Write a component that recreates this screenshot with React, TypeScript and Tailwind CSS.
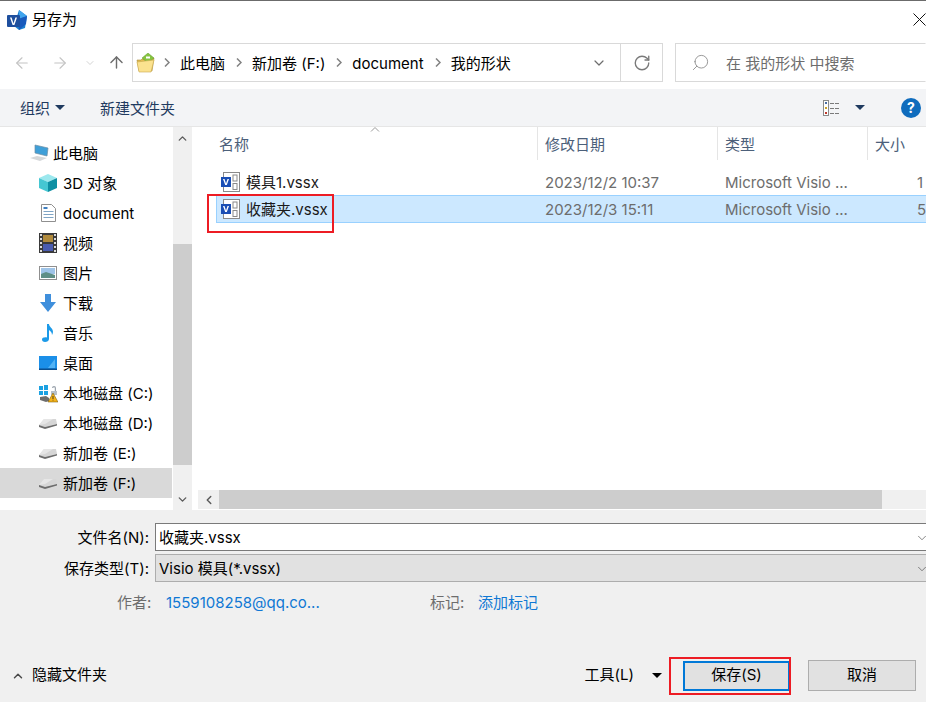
import React from "react";
import { ArrowLeft, ArrowRight, ArrowUp, ChevronDown, ChevronLeft, ChevronUp, RotateCw, Search } from "lucide-react";

const FONT = "font-['Inter','Noto_Sans_CJK_SC',sans-serif]";

function VisioLogo() {
  return (
    <svg width="20" height="20" viewBox="0 0 20 20" className="shrink-0">
      <path d="M12 0l8 6-2 12-6 2-5-4z" fill="#1a7fd0" />
      <path d="M12 0l8 6-8 3z" fill="#41a5ee" />
      <path d="M11 9l9-3-1 8-7 6z" fill="#185abd" />
      <rect x="0" y="5" width="13" height="12" rx="1" fill="#1e4f9e" />
      <path d="M3 7.5h1.6l1.9 6 1.9-6H10l-2.6 7.5H5.6z" fill="#fff" />
    </svg>
  );
}

function FileIcon() {
  return (
    <svg width="19" height="20" viewBox="0 0 19 20" className="shrink-0">
      <rect x="2.5" y="0.5" width="16" height="19" fill="#fff" stroke="#8a8a8a" />
      <rect x="12" y="3" width="4" height="6" fill="#fff" stroke="#8a8a8a" />
      <rect x="12" y="11.5" width="4" height="6" fill="#fff" stroke="#8a8a8a" />
      <rect x="0" y="5" width="10" height="10" fill="#1b4fb5" />
      <path d="M2 7h1.5l1.500 4.500L6.500 7H8l-2.200 6H4.200z" fill="#fff" />
    </svg>
  );
}

function AddressFolder() {
  return (
    <svg width="19" height="20" viewBox="0 0 19 20">
      <path d="M1 7h4l1-1h4l8-1-2 13H3z" fill="#e3bd4f" stroke="#a88c3c" strokeWidth="0.6" />
      <path d="M6 5l6-5 6 5-6 5z" fill="#86c440" stroke="#5f9a2a" strokeWidth="0.5" />
      <path d="M10 3.500h4v2h-4z" fill="#fff" />
      <path d="M1 9l17-2-3 12H3z" fill="#fbe28f" stroke="#c9a94f" strokeWidth="0.6" />
    </svg>
  );
}

function DriveIcon() {
  return (
    <svg width="18" height="11" viewBox="0 0 18 11">
      <path d="M5 1h12l1 5-12 3-6-2z" fill="#d6d6d6" />
      <path d="M0 7l6 2 12-3v1.500L6 11 0 9z" fill="#6d6d6d" />
      <path d="M5 1h9L6 6 0 7z" fill="#e6e6e6" />
    </svg>
  );
}

function NavIcon({ name }: { name: string }) {
  switch (name) {
    case "pc":
      return (
        <svg width="20" height="18" viewBox="0 0 20 18">
          <path d="M6 1l13 3-1 8-12-3z" fill="#3f9fd8" stroke="#6f8ea3" strokeWidth="0.7" />
          <path d="M1 14l7-2 10 2-7 3z" fill="#d5d8da" />
        </svg>
      );
    case "cube":
      return (
        <svg width="18" height="18" viewBox="0 0 18 18">
          <path d="M9 0l9 4-9 4-9-4z" fill="#9ce8ee" />
          <path d="M0 4l9 4v10l-9-4z" fill="#45c7d2" />
          <path d="M18 4L9 8v10l9-4z" fill="#0d8fa3" />
        </svg>
      );
    case "doc":
      return (
        <svg width="15" height="18" viewBox="0 0 15 18">
          <path d="M.5.500h10l4 4v13H.500z" fill="#fff" stroke="#8f8f8f" />
          <path d="M2.500 3h4v2h-4z" fill="#3f7fc0" />
          <path d="M2.500 7h10v1h-10zM2.500 10h10v1h-10zM2.500 13h10v1h-10z" fill="#7fa4c4" />
        </svg>
      );
    case "film":
      return (
        <svg width="18" height="20" viewBox="0 0 18 20">
          <rect width="18" height="20" fill="#3a3a3a" />
          <path d="M1 1h2v2H1zM1 5h2v2H1zM1 9h2v2H1zM1 13h2v2H1zM1 17h2v2H1zM15 1h2v2h-2zM15 5h2v2h-2zM15 9h2v2h-2zM15 13h2v2h-2zM15 17h2v2h-2z" fill="#ddd" />
          <rect x="4" y="2" width="10" height="7" fill="#b08a3c" />
          <rect x="4" y="11" width="10" height="7" fill="#4a5cb0" />
        </svg>
      );
    case "pic":
      return (
        <svg width="18" height="14" viewBox="0 0 18 14">
          <rect x=".5" y=".5" width="17" height="13" fill="#fff" stroke="#8f8f8f" />
          <rect x="2" y="2" width="14" height="6" fill="#9fc4e8" />
          <path d="M2 8l5-2 9 3v3H2z" fill="#5f8f86" />
        </svg>
      );
    case "down":
      return (
        <svg width="16" height="18" viewBox="0 0 16 18">
          <path d="M5 0h6v8h5l-8 10L0 8h5z" fill="#3f8fdc" />
        </svg>
      );
    case "music":
      return (
        <svg width="12" height="18" viewBox="0 0 12 18">
          <path d="M5 0h2c0 3 4 4 4 8 0 1-.5 2-1 3 0-3-2-4-3-5v9c0 2-2 3-4 3s-3-1-3-2.500S2 13 5 13.500z" fill="#1c9ae8" />
        </svg>
      );
    case "desk":
      return (
        <svg width="18" height="14" viewBox="0 0 18 14">
          <rect width="18" height="14" fill="#1b8fe8" />
          <path d="M9 12l7-9v9z" fill="#52b3f5" />
          <rect y="12.500" width="18" height="1.500" fill="#0b4f8f" />
        </svg>
      );
    case "win":
      return (
        <svg width="20" height="20" viewBox="0 0 20 20" className="shrink-0">
          <path d="M1 3h4v4H1zM6 2h4v5H6zM1 8h4v4H1zM6 8h4v4H6z" fill="#1ba1e2" />
          <path d="M2 14l6-1 3 2v3l-3 1-6-2z" fill="#6d6d6d" />
          <path d="M14 5a2 2 0 014 0v4h-1.200V5a.8.8 0 00-1.600 0z" fill="#9aa3ad" />
          <rect x="13" y="8" width="6" height="4" fill="#b7c0c9" />
          <path d="M15 10l5 9H10z" fill="#f5b31a" stroke="#6b4f00" strokeWidth="0.5" />
          <path d="M14.600 13h.8v3h-.8zM14.600 16.800h.8v.8h-.8z" fill="#222" />
        </svg>
      );
    default:
      return <DriveIcon />;
  }
}

const TREE = [
  { label: "3D 对象", icon: "cube" },
  { label: "document", icon: "doc" },
  { label: "视频", icon: "film" },
  { label: "图片", icon: "pic" },
  { label: "下载", icon: "down" },
  { label: "音乐", icon: "music" },
  { label: "桌面", icon: "desk" },
  { label: "本地磁盘 (C:)", icon: "win" },
  { label: "本地磁盘 (D:)", icon: "drive" },
  { label: "新加卷 (E:)", icon: "drive" },
  { label: "新加卷 (F:)", icon: "drive", active: true },
];

const CRUMBS = ["此电脑", "新加卷 (F:)", "document", "我的形状"];

const Caret = () => (
  <span className="inline-block h-0 w-0 border-x-[5px] border-t-[5px] border-x-transparent border-t-[#1f3a5f]" />
);

function Crumb({ label }: { label: string }) {
  return (
    <div className="flex items-center">
      <svg width="6" height="9" viewBox="0 0 6 9" className="mr-[10px]">
        <path d="M1 .5l4 4-4 4" fill="none" stroke="#808080" strokeWidth="1.5" />
      </svg>
      <span className="mr-[11px] whitespace-nowrap pt-[3px] text-[15px] text-black">{label}</span>
    </div>
  );
}

function FileRow({ name, date, size, selected }: { name: string; date: string; size: string; selected?: boolean }) {
  return (
    <div
      className={
        selected
          ? "ml-[21px] flex h-[28px] items-center border-y border-l border-[#99d1ff] bg-[#cce8ff]"
          : "ml-[21px] flex h-[27px] items-center border-y border-l border-transparent"
      }
    >
      <div className="flex w-[328px] shrink-0 items-center pl-[4px]">
        <FileIcon />
        <span className={`ml-[6px] text-[15px] text-[#1a1a1a] ${selected ? "pt-[2px]" : "pt-[3px]"}`}>{name}</span>
      </div>
      <span className={`w-[180px] shrink-0 text-[15px] text-[#6d6d6d] ${selected ? "pt-[2px]" : "pt-[3px]"}`}>{date}</span>
      <span className={`w-[192px] shrink-0 whitespace-nowrap text-[15px] text-[#6d6d6d] ${selected ? "pt-[2px]" : "pt-[3px]"}`}>
        Microsoft Visio ...
      </span>
      <span className={`text-[15px] text-[#6d6d6d] ${selected ? "pt-[2px]" : "pt-[3px]"}`}>{size}</span>
    </div>
  );
}

export default function App() {
  return (
    <div className={`relative flex h-[702px] w-[926px] flex-col overflow-hidden bg-white ${FONT}`}>
      <div className="h-px bg-[#6b6b6b]" />

      {/* title bar */}
      <div className="flex h-[37px] items-center pl-[7px]">
        <VisioLogo />
        <span className="ml-[5px] pt-[2px] text-[15px] text-black">另存为</span>
        <svg width="13" height="13" viewBox="0 0 13 13" className="ml-auto">
          <path d="M.5.500l12 12M12.500.500l-12 12" stroke="#111" fill="none" />
        </svg>
      </div>

      {/* address row */}
      <div className="flex h-[51px] items-start pt-[5px]">
        <div className="flex h-[39px] w-[132px] shrink-0 items-center pl-[13px] text-[#c4c4c4]">
          <ArrowLeft className="h-[18px] w-[18px]" strokeWidth={1.5} />
          <ArrowRight className="ml-[20px] h-[18px] w-[18px]" strokeWidth={1.5} />
          <ChevronDown className="ml-[15px] h-[12px] w-[12px]" strokeWidth={1.5} />
          <ArrowUp className="ml-[11px] h-[19px] w-[19px] text-[#6d6d6d]" strokeWidth={1.8} />
        </div>
        <div className="flex h-[39px] w-[531px] shrink-0 items-center border border-[#d9d9d9]">
          <div className="ml-[3px] mr-[9px]">
            <AddressFolder />
          </div>
          {CRUMBS.map((c) => (
            <Crumb key={c} label={c} />
          ))}
          <ChevronDown className="ml-auto mr-[13px] h-[16px] w-[16px] text-[#6d6d6d]" strokeWidth={1.8} />
          <div className="flex h-full w-[42px] items-center justify-center border-l border-[#d9d9d9]">
            <RotateCw className="h-[18px] w-[18px] text-[#7a7a7a]" strokeWidth={1.8} />
          </div>
        </div>
        <div className="ml-[12px] flex h-[39px] flex-1 items-center border border-y-[#d9d9d9] border-l-[#d9d9d9] border-r-transparent pl-[15px]">
          <Search className="h-[19px] w-[19px] -scale-x-100 text-[#8a8a8a]" strokeWidth={1.1} />
          <span className="ml-[16px] whitespace-nowrap pt-[3px] text-[15px] text-[#6d6d6d]">在 我的形状 中搜索</span>
        </div>
      </div>

      {/* toolbar */}
      <div className="flex h-[38px] items-center border-b border-[#e6e6e6] bg-[#f3f4f6] pl-[20px] text-[15px] text-[#1f3a5f]">
        <span className="pt-[3px]">组织</span>
        <span className="ml-[5px] flex">
          <Caret />
        </span>
        <span className="ml-[35px] pt-[3px]">新建文件夹</span>
        <svg width="17" height="16" viewBox="0 0 17 16" className="ml-auto">
          <rect x=".5" y=".5" width="5" height="15" fill="#fff" stroke="#8a8a8a" />
          <path d="M2 2h2v2H2z" fill="#4a6fa5" />
          <path d="M2 7h2v2H2z" fill="#c9a227" />
          <path d="M2 12h2v2H2z" fill="#c0392b" />
          <path d="M7 3h4v1H7zM12 3h4v1h-4zM7 8h4v1H7zM12 8h4v1h-4zM7 13h4v1H7zM12 13h4v1h-4z" fill="#7a7a7a" />
        </svg>
        <span className="ml-[15px] flex">
          <Caret />
        </span>
        <span className="ml-[36px] mr-[5px] flex h-[20px] w-[20px] items-center justify-center rounded-full bg-[#0f6cbd] text-[14px] font-bold text-white">
          ?
        </span>
      </div>

      {/* main */}
      <div className="flex h-[383px]">
        <div className="w-[173px] shrink-0 pt-[11px]">
          <div className="flex h-[30px] items-center pl-[29px]">
            <NavIcon name="pc" />
            <span className="ml-[4px] pt-[2px] text-[15px] text-black">此电脑</span>
          </div>
          {TREE.map((t) => (
            <div
              key={t.label}
              className={`flex h-[30px] items-center pl-[39px] ${t.active ? "mr-px bg-[#d9d9d9]" : ""}`}
            >
              <span className="flex w-[18px] shrink-0 items-center justify-center">
                <NavIcon name={t.icon} />
              </span>
              <span className="ml-[6px] whitespace-nowrap pt-[2px] text-[15px] text-black">{t.label}</span>
            </div>
          ))}
        </div>

        {/* tree scrollbar */}
        <div className="flex w-[19px] shrink-0 flex-col bg-[#f0f0f0]">
          <div className="flex h-[22px] items-center justify-center">
            <ChevronUp className="h-[13px] w-[13px] text-[#5a5a5a]" strokeWidth={2.5} />
          </div>
          <div className="mt-[95px] h-[221px] bg-[#cdcdcd]" />
          <div className="mt-auto flex h-[22px] items-center justify-center">
            <ChevronDown className="h-[13px] w-[13px] text-[#5a5a5a]" strokeWidth={2.5} />
          </div>
        </div>
        <div className="w-[3px] shrink-0" />

        {/* file list */}
        <div className="relative flex min-w-0 flex-1 flex-col">
          <div className="flex h-[33px] items-center text-[15px] text-[#4c607a]">
            <div className="flex h-full w-[343px] shrink-0 items-center border-r border-[#e5e5e5] pl-[24px] pt-[3px]">名称</div>
            <div className="flex h-full w-[180px] shrink-0 items-center border-r border-[#e5e5e5] pl-[7px] pt-[3px]">修改日期</div>
            <div className="flex h-full w-[150px] shrink-0 items-center border-r border-[#e5e5e5] pl-[7px] pt-[3px]">类型</div>
            <div className="whitespace-nowrap pl-[7px] pt-[3px]">大小</div>
          </div>
          <svg width="10" height="5" viewBox="0 0 10 5" className="absolute left-[175px] top-0">
            <path d="M1 4.500l4-4 4 4" fill="none" stroke="#9a9a9a" />
          </svg>
          <div className="mt-[8px]">
            <FileRow name="模具1.vssx" date="2023/12/2 10:37" size="1" />
            <FileRow name="收藏夹.vssx" date="2023/12/3 15:11" size="5" selected />
          </div>

          <div className="mb-px ml-[3px] mt-auto flex h-[19px] bg-[#f0f0f0]">
            <div className="flex w-[21px] items-center justify-center">
              <ChevronLeft className="h-[14px] w-[14px] text-[#5a5a5a]" strokeWidth={2.5} />
            </div>
            <div className="h-full w-[663px] bg-[#cdcdcd]" />
          </div>
        </div>
      </div>

      {/* form */}
      <div className="flex min-h-0 flex-1 flex-col bg-[#f0f0f0] pt-[13px]">
        <div className="flex h-[28px] items-center">
          <span className="w-[149px] pt-[2px] text-right text-[15px] text-black">文件名(N):</span>
          <div className="ml-[6px] flex h-full flex-1 items-center border border-r-0 border-[#7a7a7a] bg-white pl-[3px] pt-[2px] text-[15px] text-black">
            收藏夹.vssx
            <ChevronDown className="ml-auto mr-[-3px] h-[14px] w-[14px] text-[#444]" strokeWidth={1.1} />
          </div>
        </div>
        <div className="mt-[3px] flex h-[28px] items-center">
          <span className="w-[149px] pt-[2px] text-right text-[15px] text-black">保存类型(T):</span>
          <div className="ml-[6px] flex h-full flex-1 items-center border border-r-0 border-[#adadad] bg-[#e1e1e1] pl-[3px] pt-[2px] text-[15px] text-black">
            Visio 模具(*.vssx)
            <ChevronDown className="ml-auto mr-[-3px] h-[14px] w-[14px] text-[#444]" strokeWidth={1.1} />
          </div>
        </div>

        <div className="mt-[9px] flex h-[24px] items-center text-[15px]">
          <span className="ml-[117px] w-[49px] text-[#6d6d6d]">作者:</span>
          <span className="w-[264px] whitespace-nowrap text-[#0f78d4]">1559108258@qq.co...</span>
          <span className="w-[48px] text-[#6d6d6d]">标记:</span>
          <span className="text-[#0f78d4]">添加标记</span>
        </div>

        <div className="mb-[11px] mt-auto flex h-[31px] items-center pl-[11px]">
          <ChevronUp className="h-[14px] w-[14px] text-[#4a4a4a]" strokeWidth={2.5} />
          <span className="ml-[7px] text-[15px] text-black">隐藏文件夹</span>
          <span className="ml-auto text-[15px] text-black">工具(L)</span>
          <span className="ml-[18px] h-0 w-0 border-x-[5px] border-t-[5px] border-x-transparent border-t-black" />
          <button className="ml-[21px] h-[30px] w-[107px] border-2 border-[#0078d7] bg-[#e1e1e1] text-[15px] text-black">
            保存(S)
          </button>
          <button className="ml-[18px] mr-[10px] h-[31px] w-[108px] border border-[#adadad] bg-[#e1e1e1] text-[15px] text-black">
            取消
          </button>
        </div>
      </div>

      {/* hand drawn red marks over the screenshot */}
      <div className="absolute left-[207px] top-[194px] h-[39px] w-[127px] border-2 border-[#ed1c24]" />
      <div className="absolute left-[669px] top-[657px] h-[38px] w-[122px] border-2 border-[#ed1c24]" />
    </div>
  );
}
